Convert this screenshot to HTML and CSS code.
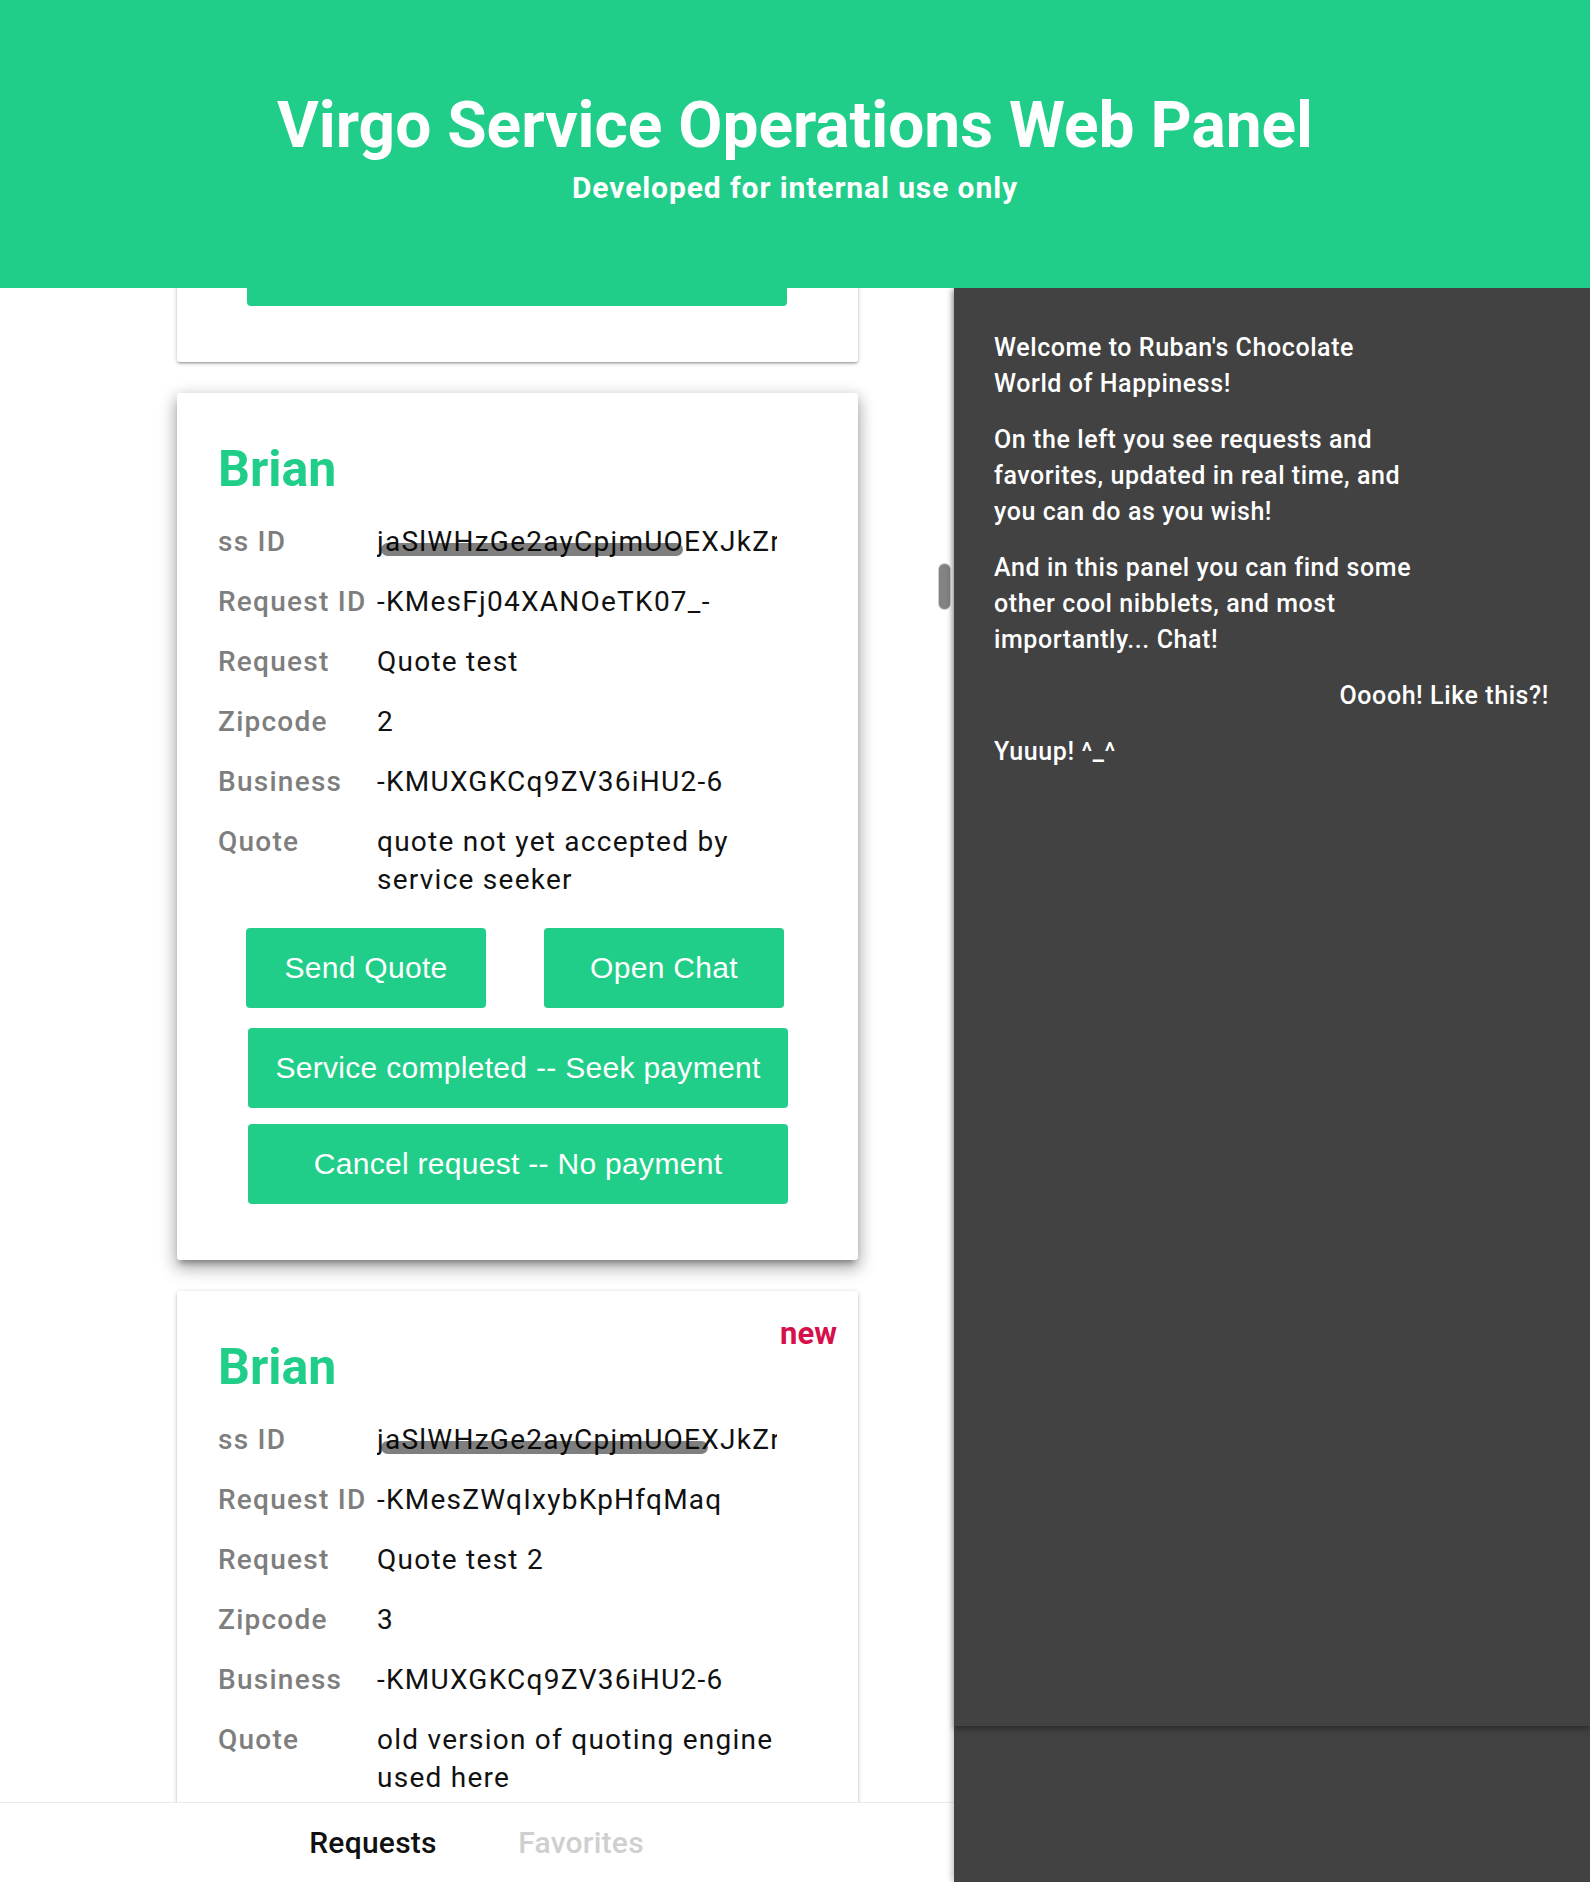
FILE: index.html
```html
<!DOCTYPE html>
<html lang="en">
<head>
<meta charset="utf-8">
<title>Virgo Service Operations Web Panel</title>
<link rel="stylesheet" href="styles.css">
</head>
<body>
<header class="top">
  <h1 class="title">Virgo Service Operations Web Panel</h1>
  <p class="subtitle">Developed for internal use only</p>
</header>
<main class="main">
  <section class="left">
    <div class="scroll">
      <div class="list">
        <div class="card card-stub"><div class="btn btn-wide"></div></div>

        <article class="card card-raised">
          <h2 class="name">Brian</h2>
          <dl class="fields">
            <dt>ss ID</dt>
            <dd class="clip"><span>jaSlWHzGe2ayCpjmUOEXJkZrH2</span><span class="hthumb hthumb-a"></span></dd>
            <dt>Request ID</dt><dd>-KMesFj04XANOeTK07_-</dd>
            <dt>Request</dt><dd>Quote test</dd>
            <dt>Zipcode</dt><dd>2</dd>
            <dt>Business</dt><dd>-KMUXGKCq9ZV36iHU2-6</dd>
            <dt>Quote</dt><dd>quote not yet accepted by service seeker</dd>
          </dl>
          <div class="actions">
            <div class="btn-row">
              <button class="btn btn-half">Send Quote</button>
              <button class="btn btn-half">Open Chat</button>
            </div>
            <button class="btn btn-wide btn-mid">Service completed -- Seek payment</button>
            <button class="btn btn-wide">Cancel request -- No payment</button>
          </div>
        </article>

        <article class="card">
          <span class="new">new</span>
          <h2 class="name">Brian</h2>
          <dl class="fields">
            <dt>ss ID</dt>
            <dd class="clip"><span>jaSlWHzGe2ayCpjmUOEXJkZrH2</span><span class="hthumb hthumb-b"></span></dd>
            <dt>Request ID</dt><dd>-KMesZWqIxybKpHfqMaq</dd>
            <dt>Request</dt><dd>Quote test 2</dd>
            <dt>Zipcode</dt><dd>3</dd>
            <dt>Business</dt><dd>-KMUXGKCq9ZV36iHU2-6</dd>
            <dt>Quote</dt><dd>old version of quoting engine used here</dd>
          </dl>
        </article>
      </div>
    </div>
    <nav class="tabs">
      <span class="tab tab-active">Requests</span>
      <span class="tab">Favorites</span>
    </nav>
    <div class="vthumb"></div>
  </section>
  <aside class="right">
    <div class="chat">
      <p class="msg">Welcome to Ruban's Chocolate World of Happiness!</p>
      <p class="msg">On the left you see requests and favorites, updated in real time, and you can do as you wish!</p>
      <p class="msg">And in this panel you can find some other cool nibblets, and most importantly... Chat!</p>
      <p class="msg msg-me">Ooooh! Like this?!</p>
      <p class="msg">Yuuup! ^_^</p>
    </div>
  </aside>
</main>
</body>
</html>
```

FILE: styles.css
```css
* { box-sizing: border-box; }
html, body { margin: 0; padding: 0; }
body {
  font-family: Roboto, "Liberation Sans", sans-serif;
  background: #fff;
  width: 1590px;
  height: 1882px;
  overflow: hidden;
}

.top {
  height: 288px;
  background: #21ce89;
  color: #fff;
  text-align: center;
  padding-top: 94px;
  position: relative;
  z-index: 2;
}
.title {
  margin: 0;
  font-size: 64px;
  line-height: 64px;
  font-weight: 700;
}
.subtitle {
  margin: 15px 0 0;
  font-size: 30px;
  line-height: 30px;
  font-weight: 700;
  letter-spacing: 0.9px;
}

.main {
  display: flex;
  height: 1594px;
}

.left {
  width: 954px;
  flex-shrink: 0;
  position: relative;
  display: flex;
  flex-direction: column;
  background: #fff;
}
.scroll {
  flex: 1;
  overflow: hidden;
}
.list {
  padding-left: 177px;
  display: flex;
  flex-direction: column;
  gap: 31px;
}

.card {
  width: 681px;
  flex-shrink: 0;
  background: #fff;
  border-radius: 3px;
  padding: 46px 41px 56px;
  position: relative;
  box-shadow: 0 2px 2px rgba(0,0,0,0.14), 0 3px 1px -2px rgba(0,0,0,0.12), 0 1px 5px rgba(0,0,0,0.2);
}
.card-stub {
  margin-top: -62px;
  padding-top: 0;
  padding-left: 70px;
}
.card-raised {
  box-shadow: 0 8px 17px 2px rgba(0,0,0,0.22), 0 3px 14px 2px rgba(0,0,0,0.12), 0 6px 6px -3px rgba(0,0,0,0.3);
}

.name {
  margin: 0;
  font-size: 50px;
  line-height: 60px;
  font-weight: 700;
  color: #21ce89;
}
.new {
  position: absolute;
  top: 27px;
  right: 21px;
  font-size: 31px;
  line-height: 31px;
  font-weight: 700;
  color: #d5104b;
}

.fields {
  display: grid;
  grid-template-columns: 159px 420px;
  row-gap: 22px;
  margin: 24px 0 0;
  font-size: 28px;
  line-height: 38px;
  letter-spacing: 1.25px;
}
.fields dt {
  color: #7e7e7e;
  font-weight: 500;
}
.fields dd {
  margin: 0;
  color: #111;
}
.fields .clip {
  width: 400px;
  overflow: hidden;
  white-space: nowrap;
  position: relative;
}
.hthumb {
  position: absolute;
  left: 4px;
  top: 20px;
  height: 13px;
  border-radius: 7px;
  background: rgba(0,0,0,0.5);
}
.hthumb-a { width: 302px; }
.hthumb-b { width: 327px; }

.actions {
  margin-top: 29px;
  display: flex;
  flex-direction: column;
  align-items: flex-start;
}
.btn-row {
  display: flex;
  gap: 58px;
  margin-left: 28px;
  margin-bottom: 20px;
}
.btn {
  display: block;
  height: 80px;
  border: none;
  border-radius: 4px;
  background: #21ce89;
  color: #fff;
  font-family: "Liberation Sans", Arial, sans-serif;
  font-size: 30px;
  letter-spacing: 0.3px;
  padding: 0;
  text-align: center;
}
.btn-half { width: 240px; }
.btn-wide { width: 540px; margin-left: 30px; }
.card-stub .btn-wide { margin-left: 0; }
.btn-mid { margin-bottom: 16px; }

.tabs {
  height: 80px;
  flex-shrink: 0;
  border-top: 1px solid #ebebeb;
  display: flex;
  justify-content: center;
  background: #fff;
}
.tab {
  width: 208px;
  text-align: center;
  font-size: 30px;
  line-height: 79px;
  font-weight: 500;
  letter-spacing: 0.25px;
  color: #cfcfcf;
}
.tab-active { color: #111; }

.vthumb {
  position: absolute;
  left: 938px;
  top: 275px;
  width: 13px;
  height: 47px;
  border-radius: 7px;
  background: #838383;
  border: 1px solid rgba(255,255,255,0.6);
}

.right {
  flex: 1;
  background: #424242;
  position: relative;
  z-index: 1;
  box-shadow: -2px 0 6px rgba(0,0,0,0.25);
}
.chat {
  height: 1438px;
  padding: 42px 41px 0 40px;
  color: #fff;
  font-size: 25px;
  line-height: 36px;
  font-weight: 500;
  letter-spacing: 0.58px;
  box-shadow: 0 3px 6px rgba(0,0,0,0.35);
}
.msg {
  margin: 0 0 20px;
  max-width: 422px;
}
.msg-me {
  margin-left: auto;
  text-align: right;
}
```
